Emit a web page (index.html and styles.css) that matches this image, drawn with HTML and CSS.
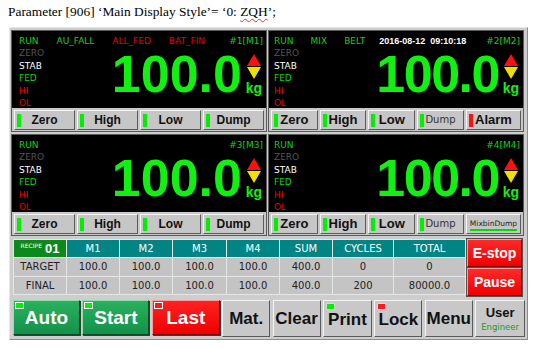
FILE: index.html
```html
<!DOCTYPE html>
<html lang="en">
<head>
  <meta charset="UTF-8">
  <title>Main Display Style</title>
  <link rel="stylesheet" href="styles.css">
</head>
<body>
  <p class="caption">Parameter [906] ‘Main Display Style’= ‘0: <span class="spell">ZQH</span>’;</p>

  <div class="hmi">
    <div class="scales">
      <section class="scale">
        <div class="display">
          <div class="status">
            <span class="g">RUN</span><span class="g">AU_FALL</span><span class="r">ALL_FED</span><span class="r">BAT_FIN</span><span class="g id">#1[M1]</span>
          </div>
          <div class="body">
            <ul class="flags"><li class="zero">ZERO</li><li class="stab">STAB</li><li class="g">FED</li><li class="hi">HI</li><li class="ol">OL</li></ul>
            <div class="weight">100.0</div>
            <div class="side">
              <svg width="14" height="26" viewBox="0 0 14 26"><polygon points="7,0 14,12 0,12" fill="#ff1010"/><polygon points="0,13 14,13 7,25" fill="#f0e000"/></svg>
              <span class="unit">kg</span>
            </div>
          </div>
        </div>
        <div class="keys">
          <button class="key on">Zero</button><button class="key on">High</button><button class="key on">Low</button><button class="key on">Dump</button>
        </div>
      </section>

      <section class="scale east">
        <div class="display">
          <div class="status busy">
            <span class="g">RUN</span><span class="g">MIX</span><span class="g">BELT</span><span class="clock">2016-08-12&nbsp;&nbsp;09:10:18</span><span class="g id">#2[M2]</span>
          </div>
          <div class="body">
            <ul class="flags"><li class="zero">ZERO</li><li class="stab">STAB</li><li class="g">FED</li><li class="hi">HI</li><li class="ol">OL</li></ul>
            <div class="weight">100.0</div>
            <div class="side">
              <svg width="14" height="26" viewBox="0 0 14 26"><polygon points="7,0 14,12 0,12" fill="#ff1010"/><polygon points="0,13 14,13 7,25" fill="#f0e000"/></svg>
              <span class="unit">kg</span>
            </div>
          </div>
        </div>
        <div class="keys five">
          <button class="key on">Zero</button><button class="key on">High</button><button class="key on">Low</button><button class="key on thin">Dump</button><button class="key alarm">Alarm</button>
        </div>
      </section>

      <section class="scale">
        <div class="display">
          <div class="status">
            <span class="g">RUN</span><span class="g id">#3[M3]</span>
          </div>
          <div class="body">
            <ul class="flags"><li class="zero">ZERO</li><li class="stab">STAB</li><li class="g">FED</li><li class="hi">HI</li><li class="ol">OL</li></ul>
            <div class="weight">100.0</div>
            <div class="side">
              <svg width="14" height="26" viewBox="0 0 14 26"><polygon points="7,0 14,12 0,12" fill="#ff1010"/><polygon points="0,13 14,13 7,25" fill="#f0e000"/></svg>
              <span class="unit">kg</span>
            </div>
          </div>
        </div>
        <div class="keys">
          <button class="key on">Zero</button><button class="key on">High</button><button class="key on">Low</button><button class="key on">Dump</button>
        </div>
      </section>

      <section class="scale east">
        <div class="display">
          <div class="status">
            <span class="g">RUN</span><span class="g id">#4[M4]</span>
          </div>
          <div class="body">
            <ul class="flags"><li class="zero">ZERO</li><li class="stab">STAB</li><li class="g">FED</li><li class="hi">HI</li><li class="ol">OL</li></ul>
            <div class="weight">100.0</div>
            <div class="side">
              <svg width="14" height="26" viewBox="0 0 14 26"><polygon points="7,0 14,12 0,12" fill="#ff1010"/><polygon points="0,13 14,13 7,25" fill="#f0e000"/></svg>
              <span class="unit">kg</span>
            </div>
          </div>
        </div>
        <div class="keys five">
          <button class="key on">Zero</button><button class="key on">High</button><button class="key on">Low</button><button class="key on thin">Dump</button><button class="key mixbin">MixbinDump</button>
        </div>
      </section>
    </div>

    <div class="board">
      <div class="recipe">
        <div class="cell rec"><small>RECIPE</small><b>01</b></div>
        <div class="cell head">M1</div><div class="cell head">M2</div><div class="cell head">M3</div><div class="cell head">M4</div>
        <div class="cell head">SUM</div><div class="cell head">CYCLES</div><div class="cell head">TOTAL</div>

        <div class="cell">TARGET</div>
        <div class="cell">100.0</div><div class="cell">100.0</div><div class="cell">100.0</div><div class="cell">100.0</div>
        <div class="cell">400.0</div><div class="cell">0</div><div class="cell">0</div>

        <div class="cell">FINAL</div>
        <div class="cell">100.0</div><div class="cell">100.0</div><div class="cell">100.0</div><div class="cell">100.0</div>
        <div class="cell">400.0</div><div class="cell">200</div><div class="cell">80000.0</div>
      </div>
      <div class="stops">
        <button class="stop">E-stop</button>
        <button class="stop">Pause</button>
      </div>
    </div>

    <div class="actions">
      <button class="act green"><i class="led lg"></i>Auto</button>
      <button class="act green"><i class="led lg"></i>Start</button>
      <button class="act red"><i class="led lr"></i>Last</button>
      <button class="act">Mat.</button>
      <button class="act">Clear</button>
      <button class="act low"><i class="led lg"></i>Print</button>
      <button class="act low"><i class="led lr"></i>Lock</button>
      <button class="act">Menu</button>
      <button class="act user"><span>User</span><em>Engineer</em></button>
    </div>
  </div>
</body>
</html>
```

FILE: styles.css
```css
body {
  margin: 0;
  background-color: #ffffff;
  font-family: "DejaVu Sans", sans-serif;
}

.caption {
  margin: 0;
  padding: 3px 0 0 8px;
  height: 24px;
  font-family: "Liberation Serif", serif;
  font-size: 13.4px;
  line-height: 18px;
  color: #000000;
}
.spell {
  text-decoration: underline wavy #e03030;
  text-decoration-thickness: 1px;
  text-underline-offset: 2px;
}

/* outer frame of the terminal */
.hmi {
  margin-left: 9px;
  width: 519px;
  height: 313px;
  box-sizing: border-box;
  padding: 2px 3px 0 1px;
  background-color: #cdcdcd;
  border: 1px solid #8c8c8c;
  border-top-color: #e6e6e6;
  border-left-color: #e6e6e6;
}

.scales {
  display: grid;
  grid-template-columns: 256px 256px;
  grid-template-rows: 102px 102px;
  column-gap: 1px;
  row-gap: 2px;
}

.scale {
  display: flex;
  flex-direction: column;
  border: 1px solid #5a5a5a;
  background-color: #c8c8c8;
}

.display {
  height: 77px;
  overflow: hidden;
  box-sizing: border-box;
  padding: 4px 3px 0 7px;
  background-color: #000000;
  font-size: 9px;
  line-height: 12.4px;
}
.scale.east .display {
  padding-left: 5px;
}

.status {
  display: flex;
  gap: 18px;
  white-space: nowrap;
}
.status.busy {
  gap: 17px;
}
.status .id {
  margin-left: auto;
}
.clock {
  margin-left: -3px;
  color: #ffffff;
  font-family: "Liberation Sans", sans-serif;
  font-weight: bold;
}
.g { color: #13d013; }
.r { color: #e80000; }

.body {
  display: flex;
}
.flags {
  flex: 1;
  margin: 0;
  padding: 0;
  list-style: none;
}
.flags .zero { color: #555555; }
.flags .stab { color: #ffffff; }
.flags .hi { color: #ff0000; }
.flags .ol { color: #e00000; }

.weight {
  margin-top: 1px;
  font-family: "Liberation Sans", sans-serif;
  font-weight: bold;
  font-size: 52px;
  line-height: 52px;
  color: #11f011;
}
.scale.east .weight {
  letter-spacing: -1.5px;
}

.side {
  width: 18px;
  margin-left: 3px;
  margin-top: 7px;
  display: flex;
  flex-direction: column;
  align-items: center;
}
.unit {
  margin-top: 1px;
  font-family: "Liberation Sans", sans-serif;
  font-weight: bold;
  font-size: 14px;
  line-height: 14px;
  color: #11f011;
}

/* soft keys under each display */
.keys {
  display: flex;
  gap: 2px;
  padding: 2px 2px 1px 2px;
}
.keys.five {
  display: grid;
  grid-template-columns: 1fr 1fr 1fr 1fr 1.18fr;
}
.key {
  position: relative;
  flex: 1;
  height: 20px;
  box-sizing: border-box;
  padding: 0;
  border: 1px solid;
  border-color: #f4f4f4 #5c5c5c #5c5c5c #f4f4f4;
  background-color: #c6c6c6;
  font-family: "Liberation Sans", sans-serif;
  font-weight: bold;
  font-size: 12px;
  line-height: 18px;
  color: #111111;
  text-align: center;
}
.keys.five .key {
  font-size: 13px;
}
.key.on::before,
.key.alarm::before {
  content: "";
  position: absolute;
  left: 2px;
  top: 3px;
  width: 4px;
  height: 13px;
  background-color: #00ee00;
}
.key.alarm::before {
  background-color: #ff1010;
}
.keys.five .key.thin {
  font-family: "DejaVu Sans", sans-serif;
  font-weight: normal;
  font-size: 10px;
  color: #333333;
}
.keys.five .key.mixbin {
  font-family: "DejaVu Sans", sans-serif;
  font-weight: normal;
  font-size: 7.5px;
  line-height: 14px;
  color: #222222;
}
.key.mixbin::after {
  content: "";
  position: absolute;
  left: 3px;
  right: 3px;
  bottom: 2px;
  height: 2px;
  background-color: #00dd00;
}

/* recipe table + stop buttons */
.board {
  display: flex;
  align-items: flex-start;
  margin-top: 2px;
  margin-left: 2px;
}
.recipe {
  display: grid;
  grid-template-columns: 52px 52px 52px 53px 52px 52px 60px 71px;
  grid-template-rows: 17px 18px 17px;
  gap: 1px;
  padding: 1px;
  margin-top: 1px;
  background-color: #e6e6e6;
}
.cell {
  background-color: #c4c4c4;
  color: #222222;
  font-size: 10px;
  line-height: 18px;
  text-align: center;
}
.cell.head {
  background-color: #008484;
  color: #ffffff;
  line-height: 17px;
}
.cell.rec {
  display: flex;
  align-items: flex-start;
  justify-content: center;
  gap: 3px;
  background-color: #0b8a1b;
  color: #ffffff;
}
.cell.rec small {
  font-size: 6px;
  line-height: 12px;
}
.cell.rec b {
  font-family: "Liberation Sans", sans-serif;
  font-size: 13px;
  line-height: 17px;
}

.stops {
  display: flex;
  flex-direction: column;
  gap: 1px;
  padding: 1px;
  background-color: #505050;
}
.stop {
  width: 55px;
  height: 28px;
  box-sizing: border-box;
  padding: 0;
  border: 1px solid;
  border-color: #ff9c9c #7a0000 #7a0000 #ff9c9c;
  background: linear-gradient(#ff2a2a, #f00000);
  color: #ffffff;
  font-family: "Liberation Sans", sans-serif;
  font-weight: bold;
  font-size: 14px;
  white-space: nowrap;
}

/* main command bar */
.actions {
  display: grid;
  grid-template-columns: 67px 67px 68px 48px 48px 49px 48px 48px 50px;
  column-gap: 2.4px;
  margin-top: 3px;
  margin-left: 2px;
  height: 37px;
}
.act {
  position: relative;
  padding: 0;
  box-sizing: border-box;
  border: 1px solid;
  border-color: #f4f4f4 #5a5a5a #5a5a5a #f4f4f4;
  background-color: #c8c8c8;
  color: #111111;
  font-family: "Liberation Sans", sans-serif;
  font-weight: bold;
  font-size: 17px;
}
.act.green,
.act.red {
  height: 35px;
  color: #ffffff;
  font-size: 19px;
  box-shadow: 1px 1px 0 #3a3a3a;
}
.act.green {
  border-color: #8fe0a8 #0b4a22 #0b4a22 #8fe0a8;
  background: linear-gradient(#2bb05e, #12924a);
}
.act.red {
  border-color: #ff9a9a #7a0000 #7a0000 #ff9a9a;
  background: linear-gradient(#ff2222, #ee0000);
}
.act.low {
  padding-top: 3px;
}
.led {
  position: absolute;
  left: 1px;
  top: 1px;
  width: 7px;
  height: 5px;
  border: 1px solid #ffffff;
}
.act.low .led {
  left: 2px;
  top: 2px;
  border-color: #d8d8d8;
}
.led.lg { background-color: #00f000; }
.led.lr { background-color: #ff1a1a; }

.act.user {
  display: flex;
  flex-direction: column;
  align-items: center;
  justify-content: center;
  gap: 3px;
}
.act.user span {
  font-size: 13px;
  line-height: 13px;
}
.act.user em {
  font-family: "DejaVu Sans", sans-serif;
  font-style: normal;
  font-weight: normal;
  font-size: 8.5px;
  line-height: 10px;
  color: #1c9a1c;
}
```
